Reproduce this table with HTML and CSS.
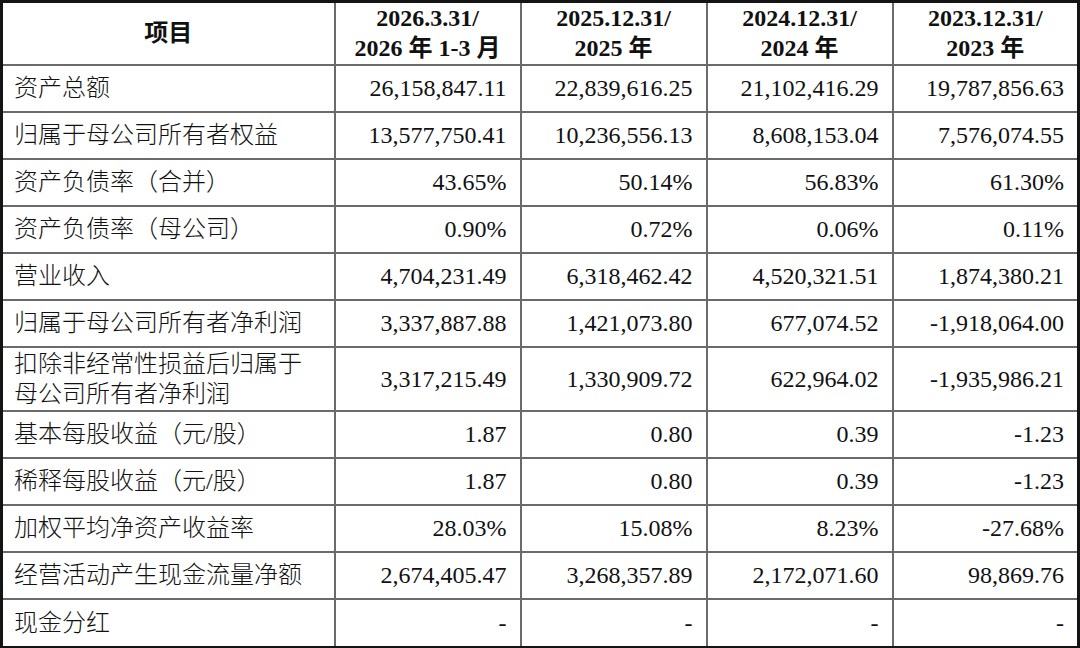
FILE: index.html
```html
<!DOCTYPE html>
<html lang="zh-CN">
<head>
<meta charset="utf-8">
<title>主要财务数据</title>
<link rel="stylesheet" href="styles.css">
</head>
<body>
<table class="fin">
  <colgroup>
    <col class="c-item">
    <col class="c-num">
    <col class="c-num">
    <col class="c-num">
    <col class="c-num">
  </colgroup>
  <thead>
    <tr class="head">
      <th>项目</th>
      <th>2026.3.31/<br>2026 年 1-3 月</th>
      <th>2025.12.31/<br>2025 年</th>
      <th>2024.12.31/<br>2024 年</th>
      <th>2023.12.31/<br>2023 年</th>
    </tr>
  </thead>
  <tbody>
    <tr><td>资产总额</td><td>26,158,847.11</td><td>22,839,616.25</td><td>21,102,416.29</td><td>19,787,856.63</td></tr>
    <tr><td>归属于母公司所有者权益</td><td>13,577,750.41</td><td>10,236,556.13</td><td>8,608,153.04</td><td>7,576,074.55</td></tr>
    <tr><td>资产负债率（合并）</td><td>43.65%</td><td>50.14%</td><td>56.83%</td><td>61.30%</td></tr>
    <tr><td>资产负债率（母公司）</td><td>0.90%</td><td>0.72%</td><td>0.06%</td><td>0.11%</td></tr>
    <tr><td>营业收入</td><td>4,704,231.49</td><td>6,318,462.42</td><td>4,520,321.51</td><td>1,874,380.21</td></tr>
    <tr><td>归属于母公司所有者净利润</td><td>3,337,887.88</td><td>1,421,073.80</td><td>677,074.52</td><td>-1,918,064.00</td></tr>
    <tr class="tall"><td>扣除非经常性损益后归属于<br>母公司所有者净利润</td><td>3,317,215.49</td><td>1,330,909.72</td><td>622,964.02</td><td>-1,935,986.21</td></tr>
    <tr><td>基本每股收益（元/股）</td><td>1.87</td><td>0.80</td><td>0.39</td><td>-1.23</td></tr>
    <tr><td>稀释每股收益（元/股）</td><td>1.87</td><td>0.80</td><td>0.39</td><td>-1.23</td></tr>
    <tr><td>加权平均净资产收益率</td><td>28.03%</td><td>15.08%</td><td>8.23%</td><td>-27.68%</td></tr>
    <tr><td>经营活动产生现金流量净额</td><td>2,674,405.47</td><td>3,268,357.89</td><td>2,172,071.60</td><td>98,869.76</td></tr>
    <tr class="last"><td>现金分红</td><td>-</td><td>-</td><td>-</td><td>-</td></tr>
  </tbody>
</table>
</body>
</html>
```
FILE: styles.css
```css
html, body {
  margin: 0;
  padding: 0;
  background: #ffffff;
}

.fin {
  width: 1079px;
  table-layout: fixed;
  border-collapse: collapse;
  border: 3px solid #141414;
  font-family: "Liberation Serif", "Noto Sans CJK SC", serif;
  font-size: 24px;
  font-weight: 300;
  color: #111111;
  line-height: 30px;
}

.c-item { width: 333px; }
.c-num { width: 186px; }

.fin th,
.fin td {
  border: 2px solid #6a6a6a;
  padding: 0 13px 0 14px;
  vertical-align: middle;
  white-space: nowrap;
}

.fin th {
  font-weight: 700;
  text-align: center;
  padding: 0;
}

.fin td {
  text-align: right;
}

.fin td:first-child {
  text-align: left;
  padding-left: 11px;
  font-weight: 200;
}

.head { height: 63px; }
.fin tbody tr { height: 47px; }
.fin tbody tr.tall { height: 64px; }
.fin tbody tr.last { height: 49px; }
```
